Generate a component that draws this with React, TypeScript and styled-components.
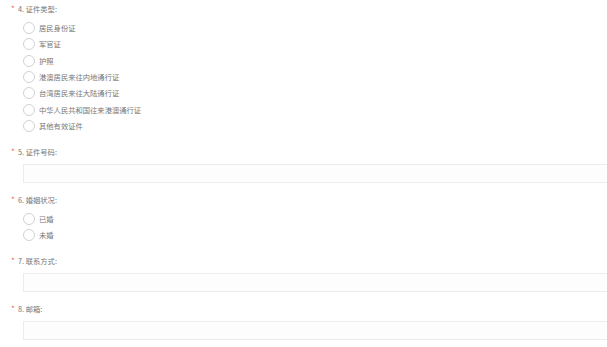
import React from "react";
import styled, { createGlobalStyle } from "styled-components";

const Global = createGlobalStyle`
  html, body { margin: 0; padding: 0; background: #fff; overflow: hidden; }
  body { font-family: "Noto Sans CJK SC", "Liberation Sans", sans-serif; }
`;

const Page = styled.div`
  width: 607px;
  height: 347px;
  overflow: hidden;
  padding-top: 3px;
  box-sizing: border-box;
`;

const Question = styled.div<{ $gap: number }>`
  display: flex;
  flex-direction: column;
  margin-bottom: ${(p) => p.$gap}px;
`;

const Label = styled.div`
  display: flex;
  align-items: center;
  height: 12px;
  padding-left: 11px;
  font-size: 7.3px;
  color: #767676;
  line-height: 12px;
  white-space: nowrap;
`;

const Star = styled.span`
  color: #f25c5c;
  width: 7px;
  font-size: 8px;
`;

const Options = styled.div`
  display: flex;
  flex-direction: column;
  padding-left: 23px;
  margin-top: 5px;
`;

const Option = styled.label`
  display: flex;
  align-items: center;
  height: 16.33px;
  font-size: 7.3px;
  color: #777;
  white-space: nowrap;
`;

const Circle = styled.span`
  width: 10px;
  height: 10px;
  border: 1px solid #d2d2d2;
  border-radius: 50%;
  box-sizing: content-box;
  margin-right: 4px;
  background: #fff;
`;

const Input = styled.div`
  margin-top: 6px;
  margin-left: 23px;
  width: 620px;
  height: 17px;
  border: 1px solid #ececec;
  background: #fdfdfd;
`;

type Q = { n: number; title: string; options?: string[] };

const questions: Q[] = [
  {
    n: 4,
    title: "证件类型",
    options: [
      "居民身份证",
      "军官证",
      "护照",
      "港澳居民来往内地通行证",
      "台湾居民来往大陆通行证",
      "中华人民共和国往来港澳通行证",
      "其他有效证件",
    ],
  },
  { n: 5, title: "证件号码" },
  { n: 6, title: "婚姻状况", options: ["已婚", "未婚"] },
  { n: 7, title: "联系方式" },
  { n: 8, title: "邮箱" },
];

export default function App() {
  return (
    <Page>
      <Global />
      {questions.map((q) => (
        <Question key={q.n} $gap={q.options ? 11.5 : 11}>
          <Label>
            <Star>*</Star>
            {q.n}. {q.title}:
          </Label>
          {q.options ? (
            <Options>
              {q.options.map((o) => (
                <Option key={o}>
                  <Circle />
                  {o}
                </Option>
              ))}
            </Options>
          ) : (
            <Input />
          )}
        </Question>
      ))}
    </Page>
  );
}
